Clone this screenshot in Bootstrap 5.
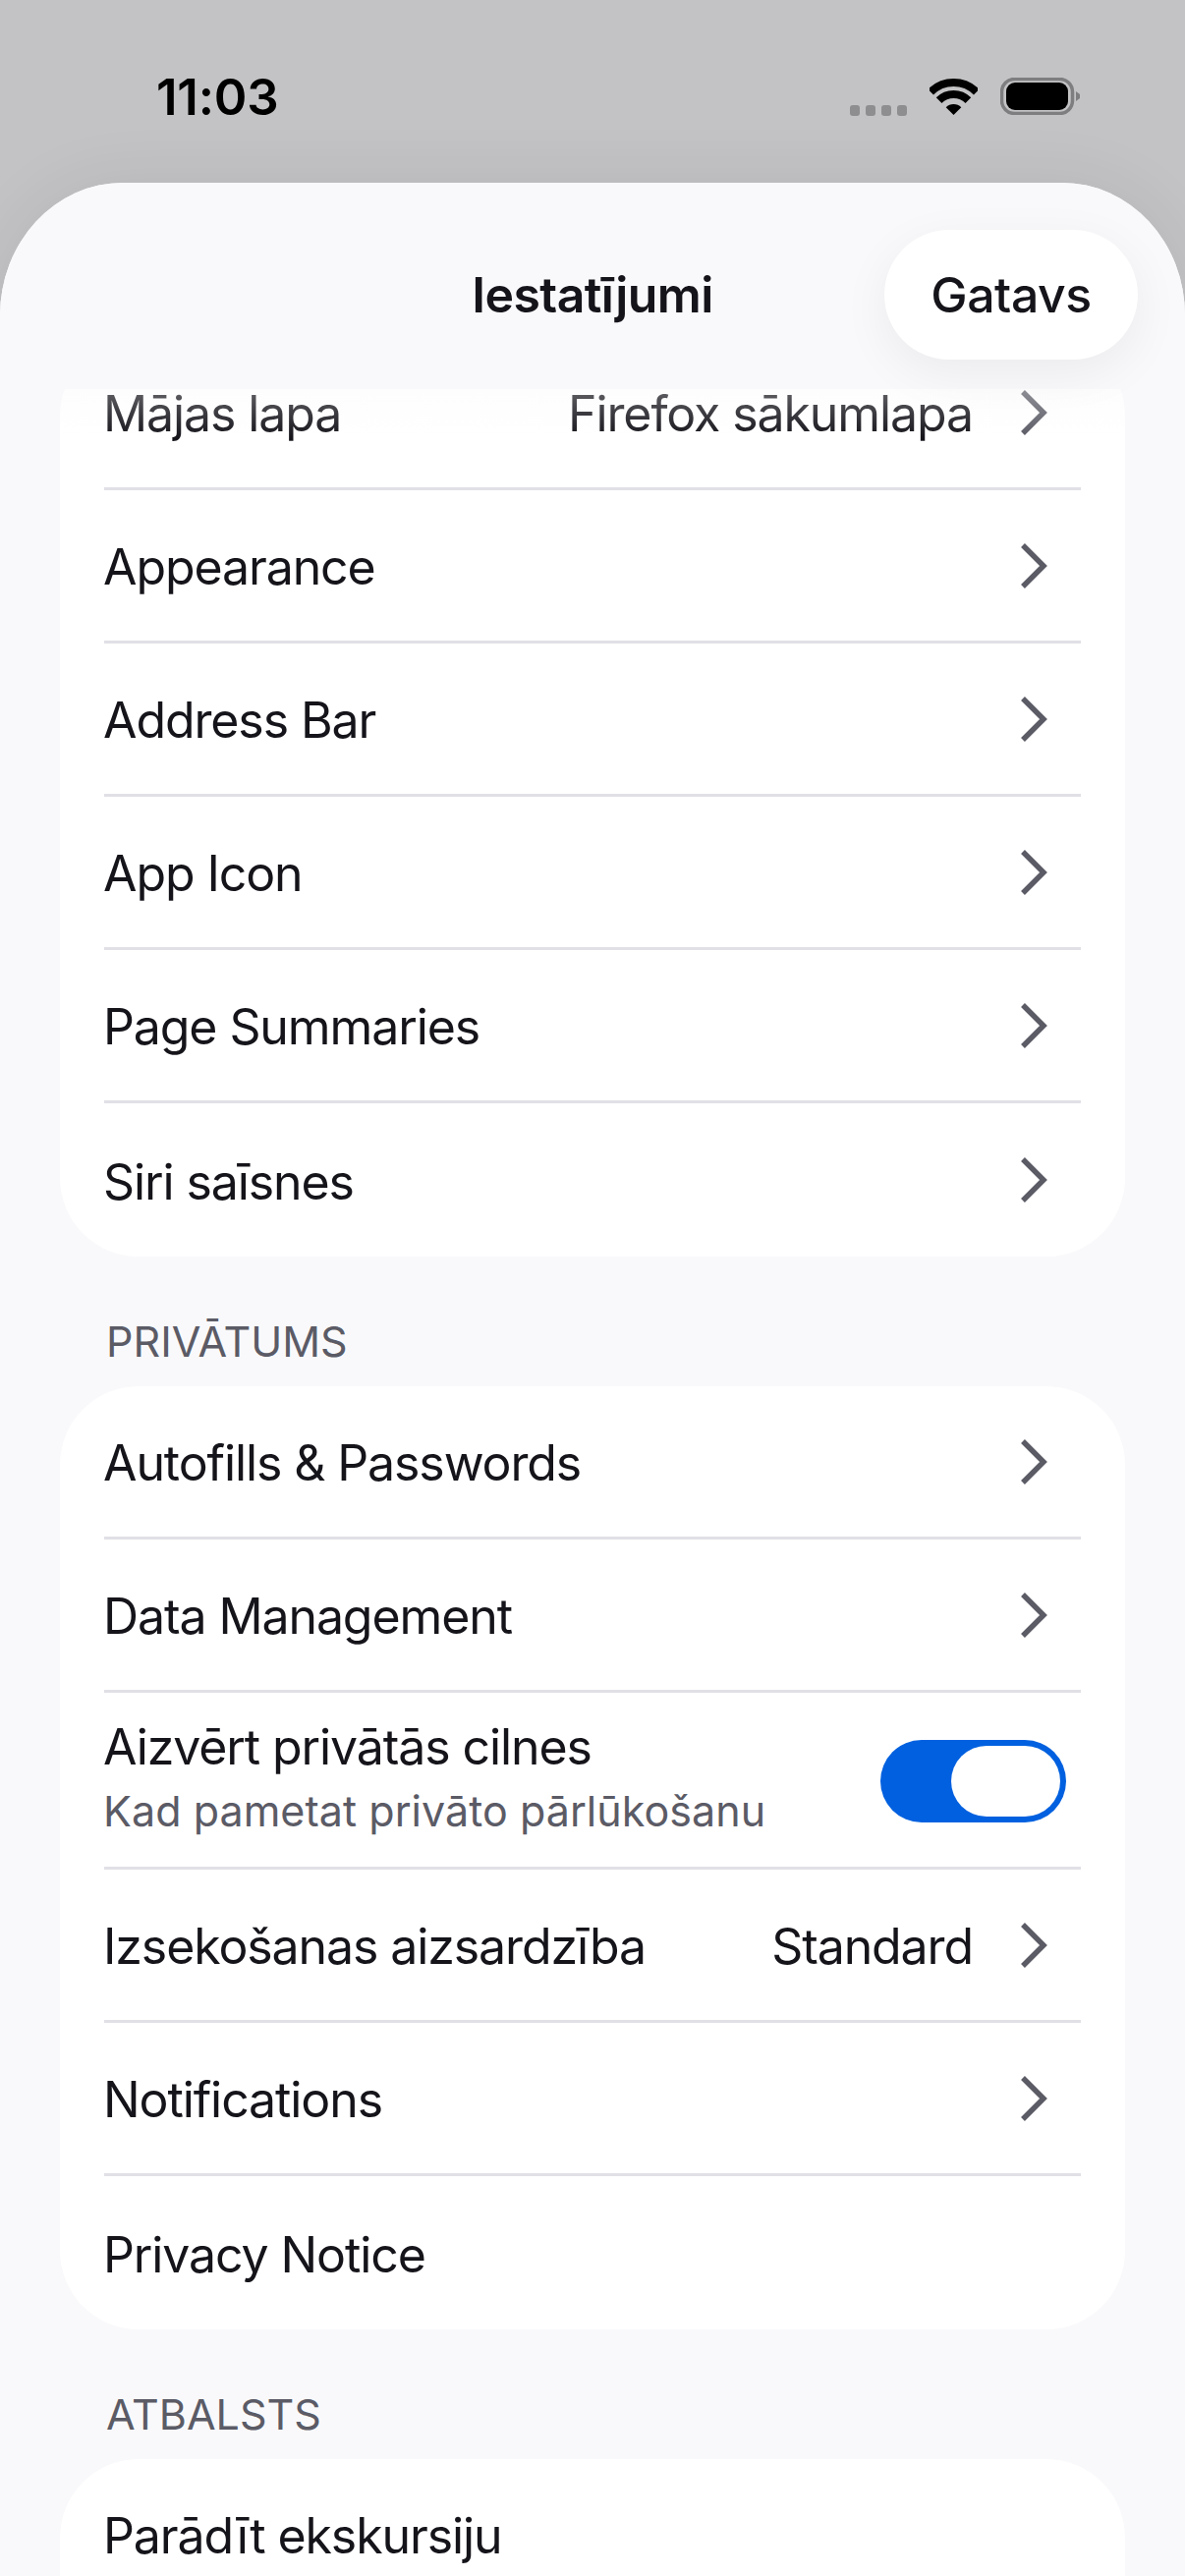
<!DOCTYPE html>
<html lang="lv">
<head>
    <meta charset="UTF-8">
    <meta name="viewport" content="width=device-width, initial-scale=1.0">
    <title>Iestatījumi</title>
    <link href="https://cdn.jsdelivr.net/npm/bootstrap@5.3.0/dist/css/bootstrap.min.css" rel="stylesheet">
    <style>
        html, body { height: 2622px; overflow: hidden; }
        body { background: #c3c3c5; font-family: Inter, "Noto Sans", sans-serif; color: #15141a; }
        .status-bar { height: 186px; padding: 10px 106px 0 159px; }
        .status-time { font-size: 51px; font-weight: 600; line-height: 1; color: #000; letter-spacing: -.2px; }
        .status-icons { gap: 23px; }
        .cell-dots { gap: 6px; margin-top: 28px; }
        .cell-dots span { width: 10px; height: 11px; border-radius: 3px; background: #8e8e90; }
        .sheet { height: 2436px; background: #f9f9fb; border-radius: 125px 125px 0 0 / 135px 135px 0 0; box-shadow: 0 0 70px rgba(0, 0, 0, .07); overflow: hidden; }
        .sheet-head { position: relative; z-index: 2; display: grid; grid-template-columns: 1fr auto 1fr; align-items: center; height: 210px; padding: 48px 48px 30px; background: #f9f9fb; }
        .sheet-title { font-size: 50px; font-weight: 600; margin: 0; line-height: 1; letter-spacing: -.6px; }
        .done-btn { justify-self: end; width: 258px; height: 132px; border: 0; border-radius: 66px; background: #fff; color: #15141a; font-size: 50px; font-weight: 500; letter-spacing: -.5px; padding: 0; box-shadow: 0 14px 50px rgba(0, 0, 0, .06); }
        .done-btn:hover { background: #fff; color: #15141a; }
        .sheet-body { position: relative; height: 2226px; overflow: hidden; }
        .sheet-body::before { content: ""; position: absolute; z-index: 1; top: 0; left: 0; right: 0; height: 50px; background: linear-gradient(#f9f9fb55, #f9f9fb00); }
        .scroll-inner { margin-top: -53px; padding: 0 61px; }
        .group-box { background: #fff; border-radius: 80px; padding: 0 45px; border: 0; }
        .group-label { font-size: 43px; line-height: 52px; color: #5b5b66; text-transform: uppercase; margin: 0; padding: 60px 0 20px 47px; }
        .set-row { height: 156px; padding: 0; border: 0; border-bottom: 3px solid #e0e0e6; background: transparent; color: #15141a; font-size: 50px; line-height: 60px; letter-spacing: -1.1px; }
        .set-row:last-child { border-bottom: 0; }
        .set-row.tall { height: 180px; }
        .row-text { padding-top: 3px; margin-left: -1px; }
        .tall .row-text { padding: 0 0 7px; }
        .row-value { padding-top: 3px; margin-right: 48px; white-space: nowrap; }
        .row-sub { font-size: 43px; line-height: 52px; letter-spacing: .05px; color: #5b5b66; margin-top: 9px; }
        .chev { width: 28px; height: 48px; margin-right: 34px; flex: none; }
        .toggle-on { width: 189px; height: 84px; margin: 3px 15px 0 0; padding: 6px; border-radius: 42px; background: #0060df; flex: none; }
        .toggle-on span { width: 111px; height: 72px; border-radius: 36px; background: #fff; }
    </style>
</head>
<body>
    <div class="status-bar d-flex justify-content-between align-items-center">
        <div class="status-time">11:03</div>
        <div class="status-icons d-flex align-items-center">
            <div class="cell-dots d-flex"><span></span><span></span><span></span><span></span></div>
            <svg width="49" height="37" viewBox="0 0 49 37">
                <path d="M1.2 13.7A33 33 0 0 1 47.8 13.7" fill="none" stroke="#000" stroke-width="8"/>
                <path d="M9.6 22.1A21 21 0 0 1 39.4 22.1" fill="none" stroke="#000" stroke-width="8"/>
                <path d="M24.5 37L16.7 29.2A11 11 0 0 1 32.3 29.2Z" fill="#000"/>
            </svg>
            <svg width="82" height="38" viewBox="0 0 82 38">
                <rect x="1.5" y="1.5" width="72" height="35" rx="13" fill="none" stroke="#7e7e80" stroke-width="3.5"/>
                <rect x="6" y="5" width="63" height="28" rx="9" fill="#000"/>
                <path d="M77 14L81 17V21L77 24Z" fill="#7e7e80"/>
            </svg>
        </div>
    </div>

    <div class="sheet">
        <div class="sheet-head">
            <div></div>
            <h1 class="sheet-title">Iestatījumi</h1>
            <button class="btn done-btn">Gatavs</button>
        </div>

        <div class="sheet-body">
            <div class="scroll-inner" id="groups"></div>
        </div>
    </div>

    <script>
        const chevron = '<svg class="chev" viewBox="0 0 28 48"><path d="M3 3L24 24L3 45" fill="none" stroke="#5b5b66" stroke-width="5.5"/></svg>';

        // same row markup for every group, only the right side changes
        const groups = [
            { rows: [
                { text: 'Mājas lapa', value: 'Firefox sākumlapa', chev: true },
                { text: 'Appearance', chev: true },
                { text: 'Address Bar', chev: true },
                { text: 'App Icon', chev: true },
                { text: 'Page Summaries', chev: true },
                { text: 'Siri saīsnes', chev: true }
            ] },
            { label: 'Privātums', rows: [
                { text: 'Autofills &amp; Passwords', chev: true },
                { text: 'Data Management', chev: true },
                { text: 'Aizvērt privātās cilnes', sub: 'Kad pametat privāto pārlūkošanu', toggle: true },
                { text: 'Izsekošanas aizsardzība', value: 'Standard', chev: true },
                { text: 'Notifications', chev: true },
                { text: 'Privacy Notice' }
            ] },
            { label: 'Atbalsts', rows: [
                { text: 'Parādīt ekskursiju' },
                { text: 'Help' }
            ] }
        ];

        function rowHtml(row) {
            let title = `<div>${row.text}</div>`;
            if (row.sub) title = `<div><div>${row.text}</div><div class="row-sub">${row.sub}</div></div>`;
            return `<div class="list-group-item set-row d-flex align-items-center${row.sub ? ' tall' : ''}">
                <div class="row-text flex-grow-1">${title}</div>
                ${row.value ? `<div class="row-value">${row.value}</div>` : ''}
                ${row.chev ? chevron : ''}
                ${row.toggle ? '<div class="toggle-on d-flex justify-content-end"><span></span></div>' : ''}
            </div>`;
        }

        document.getElementById('groups').innerHTML = groups.map(group => `
            ${group.label ? `<p class="group-label">${group.label}</p>` : ''}
            <div class="list-group group-box">${group.rows.map(rowHtml).join('')}</div>
        `).join('');
    </script>

    <script src="https://cdn.jsdelivr.net/npm/bootstrap@5.3.0/dist/js/bootstrap.bundle.min.js"></script>
</body>
</html>
